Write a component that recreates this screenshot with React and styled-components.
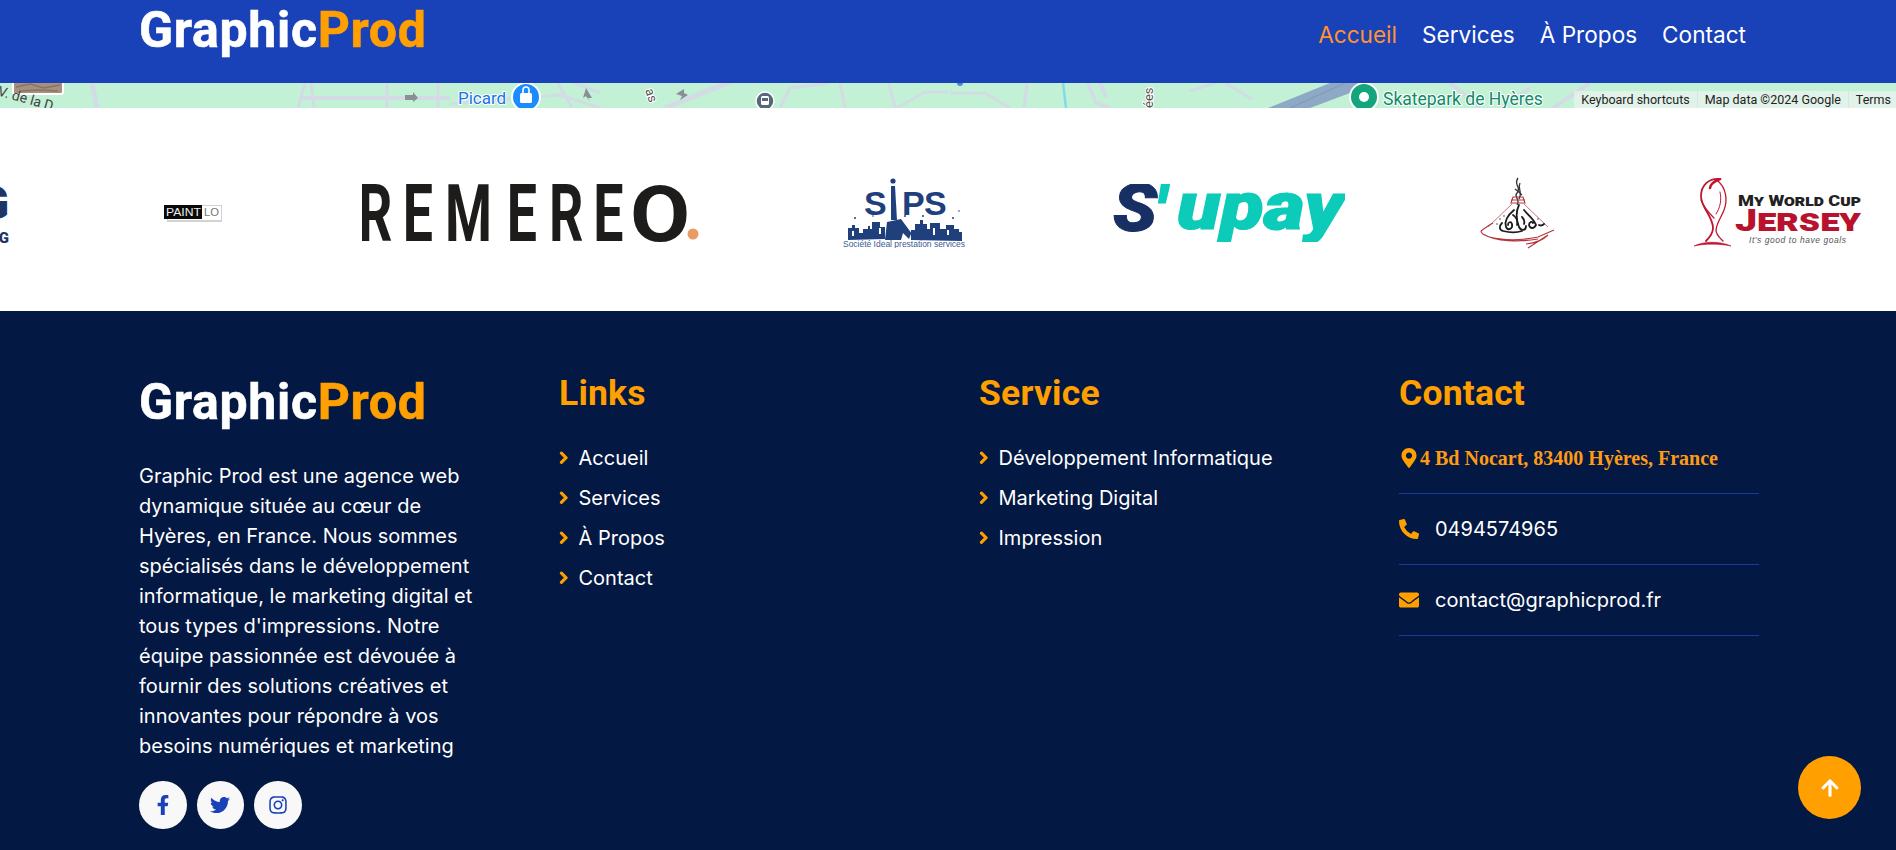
import React from "react";
import styled, { createGlobalStyle } from "styled-components";
import {
  FaFacebookF,
  FaTwitter,
  FaInstagram,
  FaMapMarkerAlt,
  FaPhoneAlt,
  FaEnvelope,
  FaArrowUp,
  FaChevronRight,
} from "react-icons/fa";

const BLUE = "#1941b8";
const NAVY = "#031842";
const ORANGE = "#ff9f00";

const Global = createGlobalStyle`
  html, body { margin: 0; padding: 0; height: 850px; overflow: hidden; background: ${NAVY}; }
  body { font-family: Inter, "Liberation Sans", sans-serif; }
  a { text-decoration: none; color: inherit; }
  ul { list-style: none; margin: 0; padding: 0; }
`;

const Page = styled.div`
  width: 1896px;
  height: 850px;
  display: flex;
  flex-direction: column;
  position: relative;
  overflow: hidden;
`;

const Header = styled.header`
  flex: none;
  height: 83px;
  background: ${BLUE};
  display: flex;
  justify-content: space-between;
  padding: 0 150px 0 139px;
  box-sizing: border-box;
`;

const Brand = styled.div`
  font-family: Roboto, "Liberation Sans", sans-serif;
  font-weight: 700;
  font-size: 50px;
  line-height: 58px;
  letter-spacing: 0.7px;
  -webkit-text-stroke: 0.6px currentColor;
  color: #fff;
  margin-top: ${(p) => p.$top}px;
  span { color: ${ORANGE}; }
`;

const Nav = styled.nav`
  display: flex;
  gap: 25px;
  margin-top: 21px;
  height: 28px;
`;

const NavLink = styled.a`
  font-size: 22.6px;
  line-height: 28px;
  font-weight: 400;
  color: ${(p) => (p.$active ? "#ff9330" : "#fff")};
`;

const MapStrip = styled.div`
  flex: none;
  height: 25px;
  position: relative;
  background: #c3f1d6;
  overflow: hidden;
  svg { display: block; }
`;

const Attribution = styled.div`
  position: absolute;
  right: 0;
  bottom: 0;
  height: 17px;
  display: flex;
  align-items: center;
  background: rgba(245, 245, 245, 0.6);
  font-family: Roboto, "Liberation Sans", sans-serif;
  font-size: 12.5px;
  color: #222;
`;

const AttributionItem = styled.span`
  padding: 0 7px;
  line-height: 17px;
  height: 17px;
  white-space: nowrap;
  & + & { border-left: 1px solid #d8e6dd; }
  &:last-child { padding-right: 5px; }
`;

const LogoStrip = styled.section`
  flex: none;
  height: 203px;
  background: #fff;
  display: flex;
  align-items: center;
  padding-top: 7px;
  box-sizing: border-box;
  overflow: hidden;
`;

const LogoMark = styled.svg`
  flex: none;
  display: block;
  margin-left: ${(p) => p.$gap}px;
`;

const Footer = styled.footer`
  flex: 1;
  background: ${NAVY};
  display: grid;
  grid-template-columns: repeat(4, 420px);
  padding: 62px 0 0 139px;
  box-sizing: border-box;
`;

const Column = styled.div`
  padding-right: ${(p) => p.$pad}px;
`;

const About = styled.p`
  margin: 30px 0 0;
  font-size: 20px;
  line-height: 30px;
  color: #fff;
`;

const Socials = styled.div`
  display: flex;
  gap: 10px;
  margin-top: 20px;
`;

const Social = styled.a`
  width: 47.5px;
  height: 48px;
  border-radius: 50%;
  background: #f8f8f8;
  color: ${BLUE};
  display: flex;
  align-items: center;
  justify-content: center;
  font-size: 20px;
`;

const Heading = styled.h3`
  margin: -1px 0 29px;
  font-family: Roboto, "Liberation Sans", sans-serif;
  font-weight: 700;
  font-size: 35.5px;
  line-height: 42px;
  letter-spacing: 0.2px;
  color: ${ORANGE};
`;

const LinkList = styled.ul`
  display: flex;
  flex-direction: column;
  gap: 10px;
`;

const LinkItem = styled.li`
  display: flex;
  align-items: center;
  gap: 8px;
  height: 30px;
  font-size: 20px;
  color: #fff;
  svg {
    color: ${ORANGE};
    font-size: 13.5px;
    flex: none;
    margin-left: -2px;
    stroke: currentColor;
    stroke-width: 40;
  }
`;

const ContactList = styled.ul`
  margin-top: -20px;
`;

const ContactRow = styled.li`
  height: 71px;
  box-sizing: border-box;
  border-bottom: 1px solid #1b3a96;
  display: flex;
  align-items: center;
  gap: ${(p) => p.$gap}px;
  font-size: 20px;
  color: #fff;
  svg { color: ${ORANGE}; font-size: 20px; flex: none; }
`;

const Address = styled.span`
  font-family: "Liberation Serif", "Times New Roman", serif;
  font-weight: 700;
  font-size: 20px;
  color: #ff9a14;
`;

const ToTop = styled.a`
  position: absolute;
  left: 1798px;
  top: 756px;
  width: 63px;
  height: 63px;
  border-radius: 50%;
  background: ${ORANGE};
  color: #fff;
  display: flex;
  align-items: center;
  justify-content: center;
  font-size: 20px;
`;

const MapDrawing = () => (
  <svg width="1896" height="25" viewBox="0 0 1896 25" fontFamily="Roboto, sans-serif">
    <g fill="none" stroke="#d3dbe4" strokeWidth="3">
      <path d="M92 0 L97 25" strokeWidth="5" />
      <path d="M298 25 L305 0 M314 25 L311 0" />
      <path d="M300 15 L450 15" strokeWidth="4" />
      <path d="M387 0 L387 25 M438 0 L438 25" />
      <path d="M450 21 L560 12 L600 25 M558 0 L572 25 M575 0 L600 10" />
      <path d="M665 25 L735 -3" strokeWidth="5" />
      <path d="M780 25 L790 5 L830 0 M840 0 L845 25 M889 0 L895 25 M897 25 L925 9 L948 9" />
      <path d="M950 10 L985 10 L1010 25 M1027 0 L1024 25" />
      <path d="M1088 0 L1096 20 L1110 25 M1100 0 L1106 14" strokeWidth="4" />
      <path d="M1190 8 L1215 0 M1225 0 L1252 16" />
      <path d="M1450 0 L1480 25 M1500 25 L1530 5 M1553 25 L1590 0" strokeWidth="4" />
    </g>
    <path d="M1063 0 L1066 25" stroke="#7fdcec" strokeWidth="2.5" fill="none" />
    <path d="M1268 25 L1330 0 L1362 0 L1350 10 L1310 25 Z" fill="#8ea9c5" />
    <path d="M1290 25 L1345 0" stroke="#7b98b8" strokeWidth="1" fill="none" />
    <circle cx="960" cy="0" r="3" fill="#4a86e8" />
    <g fill="#8a8f96">
      <path d="M405 12 L413 12 L413 9 L418 15 L413 19 L413 17 L405 17 Z" />
      <path d="M586 5 L592 15 L588 15 L590 19 L586 13 L583 15 Z" />
      <path d="M676 11 L684 6 L684 10 L688 12 L680 17 L682 13 Z" />
    </g>
    <rect x="13" y="-12" width="50" height="23" rx="2" fill="#a68f7f" stroke="#fff" strokeWidth="2" />
    <path d="M16 4 L30 1 L44 5 L60 2 M20 8 L40 7 L58 8" stroke="#8a7363" strokeWidth="1.5" fill="none" />
    <text x="-3" y="13" fontSize="14" fill="#444" transform="rotate(16 0 13)">V. de la D.</text>
    <text x="458" y="21" fontSize="17" fill="#1a73e8" stroke="#fff" strokeWidth="2" paintOrder="stroke">Picard</text>
    <circle cx="526" cy="14" r="14" fill="#1a8cff" stroke="#fff" strokeWidth="2" />
    <rect x="520" y="10" width="12" height="10" rx="1.5" fill="#fff" />
    <path d="M523 10 V7 a3 3 0 0 1 6 0 V10" fill="none" stroke="#fff" strokeWidth="1.6" />
    <text x="0" y="0" fontSize="13" fill="#555" stroke="#fff" strokeWidth="2" paintOrder="stroke" transform="translate(645 7) rotate(72)">as</text>
    <circle cx="765" cy="18" r="9" fill="#56677a" stroke="#fff" strokeWidth="1.5" />
    <rect x="761" y="13" width="8" height="9" rx="1.5" fill="#fff" />
    <rect x="762" y="15" width="6" height="3" fill="#56677a" />
    <text x="0" y="0" fontSize="13" fill="#555" stroke="#fff" strokeWidth="2" paintOrder="stroke" transform="translate(1153 25) rotate(-90)">ées</text>
    <circle cx="1364" cy="14" r="14" fill="#14a57c" stroke="#fff" strokeWidth="2" />
    <circle cx="1364" cy="14" r="5" fill="#fff" />
    <text x="1383" y="22" fontSize="17.5" fill="#0f8a66" stroke="#fff" strokeWidth="2" paintOrder="stroke">Skatepark de Hyères</text>
  </svg>
);

const CutG = () => (
  <LogoMark $gap={-51} width="60" height="64" viewBox="0 0 60 64">
    <text x="60" y="38" textAnchor="end" fontFamily="Roboto, sans-serif" fontWeight="900" fontSize="46" fill="#1f3566">G</text>
    <text x="60" y="62" textAnchor="end" fontFamily="Roboto, sans-serif" fontWeight="900" fontSize="15" fill="#1f3566">G</text>
  </LogoMark>
);

const PaintLo = () => (
  <LogoMark $gap={155} width="58" height="18" viewBox="0 0 58 18">
    <rect x="3" y="1" width="55" height="17" fill="#d2d2d2" />
    <rect x="4" y="2" width="53" height="14" fill="#fff" />
    <rect x="0" y="1" width="38" height="14" fill="#0a0a0a" />
    <text x="2" y="12" fontFamily="Liberation Sans, sans-serif" fontSize="10.5" fill="#eee" textLength="35" lengthAdjust="spacingAndGlyphs">PAINT</text>
    <text x="40" y="12" fontFamily="Liberation Sans, sans-serif" fontSize="10.5" fill="#777" textLength="15" lengthAdjust="spacingAndGlyphs">LO</text>
  </LogoMark>
);

const Remereo = () => (
  <LogoMark $gap={140} width="338" height="58" viewBox="0 0 338 58">
    <g fontFamily="Roboto, sans-serif" fontWeight="700" fill="#1d1c1a">
      <text transform="scale(0.68 1)" x="-6 60 122 213 275 340" y="57" fontSize="79">REMERE</text>
      <text transform="translate(268 0) scale(1.12 1)" x="0" y="56.5" fontSize="78">O</text>
    </g>
    <circle cx="331" cy="50" r="5.5" fill="#e89c63" />
  </LogoMark>
);

const Sips = () => (
  <LogoMark $gap={143} width="124" height="70" viewBox="0 0 124 70">
    <circle cx="50" cy="3" r="2.6" fill="#1f3f7d" />
    <text x="21 46 59 81" y="37" fontFamily="Liberation Sans, sans-serif" fontWeight="700" fontSize="34" fill="#1f3f7d">SIPS</text>
    <rect x="44" y="8" width="13" height="32" fill="#fff" />
    <path d="M48 8 L52 8 L54 42 L48 42 Z" fill="#1f3f7d" />
    <path d="M44 44 L58 41 L72 60 L68 56 L66 61 L60 55 L58 62 L42 62 Z" fill="#1f3f7d" />
    <path
      d="M5 62 V50 h4 v-3 h3 v3 h4 v5 h4 v-4 h5 v-3 h2 v3 h2 v-7 h8 v5 h5 v12 Z M68 62 V52 h4 v-6 h5 v-4 h3 v4 h4 v5 h3 v-6 h10 v6 h6 v-4 h8 v4 h5 v3 h3 v9 Z"
      fill="#1f3f7d"
    />
    <g fill="#fff">
      <rect x="9" y="53" width="2" height="5" />
      <rect x="36" y="50" width="2" height="6" />
      <rect x="90" y="50" width="2" height="7" />
      <rect x="104" y="52" width="2" height="5" />
    </g>
    <g fill="#1f3f7d">
      <circle cx="12" cy="40" r="1" />
      <circle cx="30" cy="38" r="0.8" />
      <circle cx="62" cy="38" r="1" />
      <circle cx="80" cy="38" r="1" />
      <circle cx="110" cy="40" r="1" />
      <circle cx="116" cy="33" r="0.8" />
    </g>
    <text x="0" y="69" fontFamily="Liberation Sans, sans-serif" fontSize="8.2" fill="#3a5a94" textLength="122" lengthAdjust="spacingAndGlyphs">Société Ideal prestation services</text>
  </LogoMark>
);

const Supay = () => (
  <LogoMark $gap={146} width="232" height="58" viewBox="0 0 232 58">
    <text x="0" y="47" fontFamily="Roboto, sans-serif" fontWeight="900" fontStyle="italic" fontSize="66" fill="#172f63" stroke="#172f63" strokeWidth="1" textLength="44" lengthAdjust="spacingAndGlyphs">S</text>
    <text x="41" y="57" fontFamily="Roboto, sans-serif" fontWeight="900" fontStyle="italic" fontSize="80" fill="#0ccbb8">'</text>
    <text x="64" y="45" fontFamily="Roboto, sans-serif" fontWeight="900" fontStyle="italic" fontSize="66" fill="#0ccbb8" stroke="#0ccbb8" strokeWidth="1.2" textLength="167" lengthAdjust="spacingAndGlyphs">upay</text>
  </LogoMark>
);

const Tajine = () => (
  <LogoMark $gap={135} width="75" height="72" viewBox="0 0 75 72">
    <path d="M38 1 C33 8 42 10 37 16 C33 20 41 22 37 28 M40 6 C37 12 43 14 39 22 M35 12 C38 14 40 16 42 18" fill="none" stroke="#333" strokeWidth="1.3" />
    <path d="M33 20 H43 L45 26 H31 Z M31 23 H45" fill="none" stroke="#b5343c" strokeWidth="1.1" />
    <path d="M32 27 L8 50 M44 27 L68 50" fill="none" stroke="#b5343c" strokeWidth="0.7" />
    <g fill="none" stroke="#1c1c1c" strokeWidth="1.8" strokeLinecap="round">
      <path d="M39 28 C36 34 36 42 39 50 C41 54 46 54 46 49" />
      <path d="M34 33 C28 38 24 44 26 50 C28 54 33 52 32 47 C31 44 28 45 28 48" />
      <path d="M44 33 C48 38 54 42 56 48 C54 52 50 52 49 48 C49 45 52 44 53 46" />
      <path d="M22 46 C19 49 19 53 23 54 C27 55 36 56 42 54" />
      <path d="M33 38 C36 40 38 44 37 48" />
      <path d="M42 40 C44 42 45 44 44 47" />
      <path d="M59 48 C61 49 63 48 64 47" />
    </g>
    <g fill="#444">
      <circle cx="20" cy="42" r="0.8" /><circle cx="24" cy="39" r="0.8" /><circle cx="17" cy="47" r="0.8" /><circle cx="58" cy="42" r="0.8" />
    </g>
    <path d="M1 54 C2 61 30 66 58 60 L74 53 M1 54 C5 51 9 48 13 46 M3 57 C16 65 40 65 58 62 M46 67 C56 66 64 62 68 58 L48 71" fill="none" stroke="#b5343c" strokeWidth="1.2" />
  </LogoMark>
);

const Jersey = () => (
  <LogoMark $gap={139} width="168" height="70" viewBox="0 0 168 70">
    <g fill="none" stroke="#c0152e" strokeLinecap="round">
      <path d="M26 1 C14 0 7 8 7 18 C7 30 19 38 19 50 C19 56 15 60 12 63" strokeWidth="1.8" />
      <path d="M26 1 C20 3 16 7 16 10" strokeWidth="2.6" />
      <path d="M24 3 C32 10 34 22 30 32 C27 40 23 44 22 52 C22 57 26 60 29 63" strokeWidth="1.3" />
      <path d="M7 22 C10 30 16 36 20 40" strokeWidth="1.2" />
      <path d="M26 14 C28 22 26 30 22 36" strokeWidth="1" />
    </g>
    <path d="M0 68 C10 63 26 63 37 68 C26 65.5 10 65.5 0 68 Z" fill="#c0152e" stroke="#c0152e" strokeWidth="0.6" />
    <text x="44" y="28" fontFamily="Roboto, sans-serif" fontWeight="900" fontSize="15.5" fontVariant="small-caps" fill="#222" textLength="123" lengthAdjust="spacingAndGlyphs">My World Cup</text>
    <text x="41" y="53" fontFamily="Roboto, sans-serif" fontWeight="900" fontSize="31" fontVariant="small-caps" fill="#b8122c" textLength="126" lengthAdjust="spacingAndGlyphs">Jersey</text>
    <text x="55" y="65" fontFamily="Liberation Sans, sans-serif" fontStyle="italic" fontSize="8.5" fill="#555" textLength="97" lengthAdjust="spacing">It's good to have goals</text>
  </LogoMark>
);

const LINKS = ["Accueil", "Services", "À Propos", "Contact"];
const SERVICES = ["Développement Informatique", "Marketing Digital", "Impression"];

const Links = ({ items }) => (
  <LinkList>
    {items.map((t) => (
      <LinkItem key={t}>
        <FaChevronRight />
        <a>{t}</a>
      </LinkItem>
    ))}
  </LinkList>
);

export default function App() {
  return (
    <Page>
      <Global />
      <Header>
        <Brand $top={1}>Graphic<span>Prod</span></Brand>
        <Nav>
          {LINKS.map((t, i) => (
            <NavLink key={t} $active={i === 0}>{t}</NavLink>
          ))}
        </Nav>
      </Header>
      <MapStrip>
        <MapDrawing />
        <Attribution>
          <AttributionItem>Keyboard shortcuts</AttributionItem>
          <AttributionItem>Map data ©2024 Google</AttributionItem>
          <AttributionItem>Terms</AttributionItem>
        </Attribution>
      </MapStrip>
      <LogoStrip>
        <CutG />
        <PaintLo />
        <Remereo />
        <Sips />
        <Supay />
        <Tajine />
        <Jersey />
      </LogoStrip>
      <Footer>
        <Column $pad={78}>
          <Brand $top={0}>Graphic<span>Prod</span></Brand>
          <About>
            Graphic Prod est une agence web dynamique située au cœur de Hyères, en France. Nous sommes spécialisés dans le développement informatique, le marketing digital et tous types d'impressions. Notre équipe passionnée est dévouée à fournir des solutions créatives et innovantes pour répondre à vos besoins numériques et marketing
          </About>
          <Socials>
            <Social><FaFacebookF /></Social>
            <Social><FaTwitter /></Social>
            <Social><FaInstagram /></Social>
          </Socials>
        </Column>
        <Column $pad={60}>
          <Heading>Links</Heading>
          <Links items={LINKS} />
        </Column>
        <Column $pad={60}>
          <Heading>Service</Heading>
          <Links items={SERVICES} />
        </Column>
        <Column $pad={60}>
          <Heading>Contact</Heading>
          <ContactList>
            <ContactRow $gap={1}><FaMapMarkerAlt /><Address>4 Bd Nocart, 83400 Hyères, France</Address></ContactRow>
            <ContactRow $gap={16}><FaPhoneAlt /><span>0494574965</span></ContactRow>
            <ContactRow $gap={16}><FaEnvelope /><span>contact@graphicprod.fr</span></ContactRow>
          </ContactList>
        </Column>
      </Footer>
      <ToTop><FaArrowUp /></ToTop>
    </Page>
  );
}
